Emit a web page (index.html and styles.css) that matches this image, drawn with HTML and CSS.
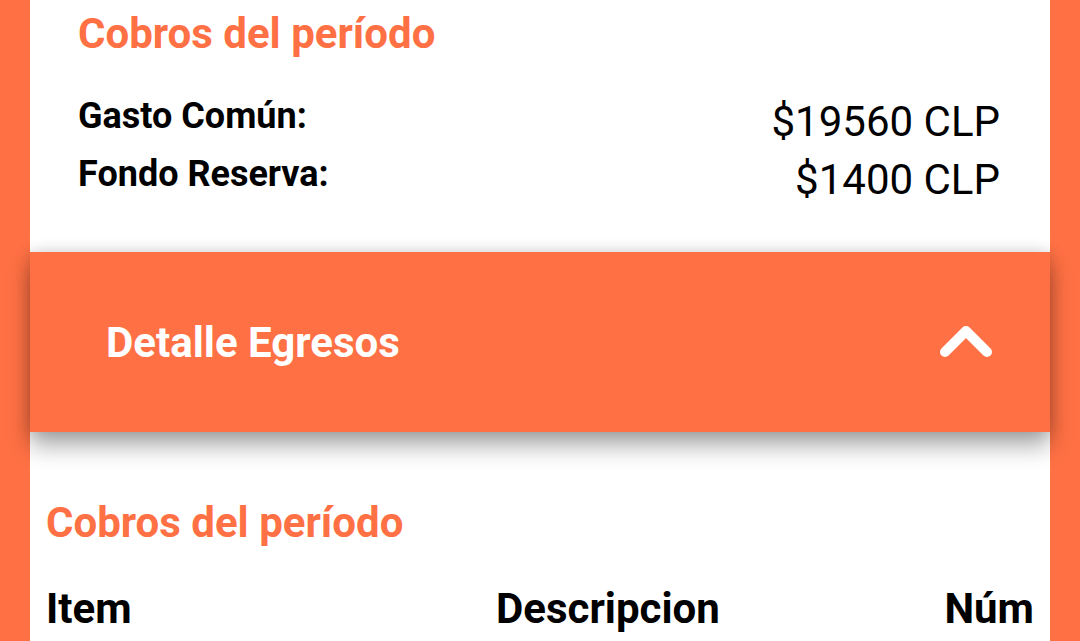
FILE: index.html
```html
<!DOCTYPE html>
<html lang="es">
<head>
<meta charset="utf-8">
<link rel="stylesheet" href="styles.css">
</head>
<body>
<main class="page">
  <section class="card summary">
    <h2 class="section-title">Cobros del período</h2>
    <div class="row">
      <span class="row-label">Gasto Común:</span>
      <span class="row-value">$19560 CLP</span>
    </div>
    <div class="row">
      <span class="row-label">Fondo Reserva:</span>
      <span class="row-value">$1400 CLP</span>
    </div>
  </section>
  <header class="panel-header">
    <span class="panel-title">Detalle Egresos</span>
    <svg class="chevron" width="54" height="32" viewBox="0 0 54 32" aria-hidden="true">
      <polyline points="6,26 27,5 48,26" fill="none" stroke="#ffffff" stroke-width="10" stroke-linecap="round" stroke-linejoin="round"/>
    </svg>
  </header>
  <section class="card detail">
    <h2 class="section-title">Cobros del período</h2>
    <div class="table-head">
      <span class="col col-item">Item</span>
      <span class="col col-desc">Descripcion</span>
      <span class="col col-num">Núm</span>
    </div>
  </section>
</main>
</body>
</html>
```
FILE: styles.css
```css
* { box-sizing: border-box; }
html, body {
  margin: 0;
  padding: 0;
  background: #ff7144;
  font-family: Roboto, "Liberation Sans", sans-serif;
  overflow: hidden;
}
.page {
  width: 1020px;
  margin: 0 30px;
  height: 641px;
  background: #ffffff;
  display: flex;
  flex-direction: column;
}
.section-title {
  margin: 0;
  color: #ff7144;
  font-size: 42px;
  font-weight: 700;
  line-height: 49px;
}
.summary {
  padding: 9px 50px 41px 48px;
}
.summary .section-title {
  margin-bottom: 37px;
}
.row {
  display: flex;
  justify-content: space-between;
  align-items: flex-start;
  height: 58px;
}
.row-label {
  font-size: 36px;
  font-weight: 700;
  line-height: 42px;
  color: #000;
}
.row-value {
  font-size: 42px;
  font-weight: 400;
  line-height: 49px;
  margin-top: 2px;
  color: #000;
}
.panel-header {
  position: relative;
  z-index: 1;
  height: 180px;
  flex: none;
  background: #ff7144;
  display: flex;
  align-items: center;
  justify-content: space-between;
  padding: 0 57px 0 76px;
  box-shadow: 0 14px 22px rgba(0,0,0,0.32), 0 0 14px rgba(0,0,0,0.16);
}
.panel-title {
  color: #ffffff;
  font-size: 42px;
  font-weight: 700;
  line-height: 49px;
}
.chevron { display: block; }
.detail {
  padding: 66px 16px 0 16px;
}
.table-head {
  display: grid;
  grid-template-columns: 450px 1fr auto;
  margin-top: 37px;
  font-size: 42px;
  font-weight: 700;
  line-height: 49px;
  color: #000;
}
```
